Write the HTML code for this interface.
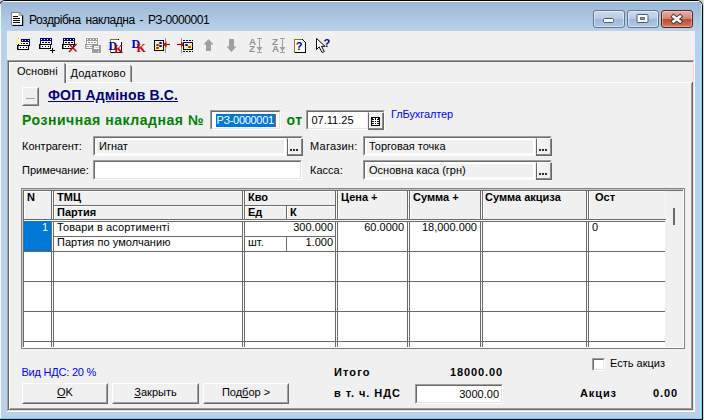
<!DOCTYPE html>
<html lang="uk">
<head>
<meta charset="utf-8">
<title>Роздрібна накладна - РЗ-0000001</title>
<style>
html,body{margin:0;padding:0;}
body{width:704px;height:420px;overflow:hidden;background:#d8d8d8;font-family:"Liberation Sans",sans-serif;font-size:11px;color:#000;position:relative;}
.a{position:absolute;white-space:nowrap;line-height:13px;}
.b{font-weight:bold;}
#win{left:-1px;top:0;width:704px;height:420px;background:#000;border-radius:6px 6px 0 0;}
#frame{left:1px;top:1px;width:702px;height:418px;background:#b9d1ea;border-radius:5px 5px 0 0;overflow:hidden;}
#titlegrad{left:0;top:0;width:702px;height:30px;background:linear-gradient(#9ab6d6 0,#a3bedc 8px,#afc8e3 19px,#b9d1ea 30px);}
#client{left:7px;top:31px;width:688px;height:381px;background:#f0f0f0;}
.fld{position:absolute;box-sizing:border-box;border:1px solid;border-color:#a0a0a0 #fff #fff #a0a0a0;background:#fff;height:20px;}
.fld i{position:absolute;left:0;top:0;right:0;bottom:0;border:1px solid;border-color:#696969 #fff #fff #696969;}
.fld.w{background:#fff;}
.fld.w i{border-color:#696969 #e3e3e3 #e3e3e3 #696969;}
.fld em{position:absolute;left:3px;top:3px;bottom:2px;background:#f0f0f0;}
.ib{position:absolute;box-sizing:border-box;background:#f0f0f0;border:1px solid;border-color:#fff #696969 #696969 #696969;box-shadow:inset -1px -1px 0 #888, inset 1px 0 0 #fff;}

.fld span{position:absolute;top:3px;line-height:13px;white-space:nowrap;font-style:normal;}
.btn{position:absolute;box-sizing:border-box;border:1px solid;border-color:#fff #696969 #696969 #fff;background:#f0f0f0;text-align:center;line-height:13px;}
.btn i{position:absolute;left:0;top:0;right:0;bottom:0;border:1px solid;border-color:#f0f0f0 #a0a0a0 #a0a0a0 #f0f0f0;}
.btn span{position:relative;font-style:normal;}
u{text-decoration:underline;}
</style>
</head>
<body>

<div id="win" class="a">
<div id="frame" class="a"><div id="titlegrad" class="a"></div>
<div class="a" style="left:0;top:0;width:702px;height:1px;background:rgba(255,255,255,.95)"></div>
<div class="a" style="left:0;top:0;width:1px;height:418px;background:rgba(255,255,255,.85)"></div>
<div class="a" style="left:701px;top:1px;width:1px;height:417px;background:linear-gradient(#d8fbff 0,#9aeeff 14px,#5fe0ff 60px)"></div>
<div class="a" style="left:0;top:417px;width:702px;height:1px;background:#4fd8ff"></div>
</div>
</div>
<div id="title" class="a" style="left:29px;top:13px;font-size:12px;line-height:14px;letter-spacing:-0.45px;word-spacing:2px;">Роздрібна накладна - РЗ-0000001</div>
<!-- caption buttons -->
<div class="a" style="left:593px;top:10px;width:32px;height:18px;border-radius:3px;box-sizing:border-box;border:1px solid #5f7593;background:linear-gradient(#c9daee 0,#b6cce6 47%,#9fbada 53%,#adc6e3 100%);box-shadow:inset 0 0 0 1px rgba(255,255,255,.5)"></div>
<div class="a" style="left:627px;top:10px;width:32px;height:18px;border-radius:3px;box-sizing:border-box;border:1px solid #5f7593;background:linear-gradient(#c9daee 0,#b6cce6 47%,#9fbada 53%,#adc6e3 100%);box-shadow:inset 0 0 0 1px rgba(255,255,255,.5)"></div>
<div class="a" style="left:661px;top:10px;width:32px;height:18px;border-radius:3px;box-sizing:border-box;border:1px solid #4f2326;background:linear-gradient(#e6b0a4 0,#d48573 47%,#bf4a30 53%,#d37a5e 100%);box-shadow:inset 0 0 0 1px rgba(255,255,255,.35)"></div>
<svg class="a" style="left:590px;top:8px" width="110" height="24" viewBox="590 8 110 24">
<rect x="603.5" y="18.500" width="10" height="4" rx="1" fill="#fff" stroke="#4a5a70" stroke-width="1"/>
<rect x="637" y="14.500" width="11" height="8" rx="1" fill="#fff" stroke="#4a5a70" stroke-width="1"/>
<rect x="640.500" y="17.500" width="4" height="2" fill="#7f9dc8" stroke="#4a5a70" stroke-width="0.800"/>
<path d="M673.500 16.500l6.500 5M680 16.500l-6.500 5" stroke="#4a3030" stroke-width="4.400" stroke-linecap="square" fill="none"/>
<path d="M673.500 16.500l6.500 5M680 16.500l-6.500 5" stroke="#fff" stroke-width="2.600" stroke-linecap="square" fill="none"/>
</svg>
<div id="client" class="a"></div>

<svg id="tb" class="a" style="left:0;top:0" width="704" height="70" viewBox="0 0 704 70" shape-rendering="crispEdges">
<!-- doc icon in title -->
<g shape-rendering="auto">
<path d="M11 12h8.500l3 3v10.300h-11.500z" fill="#808080"/>
<path d="M12.500 25.500h10.100v-10.300" stroke="#000" stroke-width="1.200" fill="none"/>
<path d="M12 13h7l3 3v8.800h-10z" fill="#fff"/>
<path d="M19 12.500v3h3z" fill="#d8d8d8" stroke="#808080" stroke-width="0.600"/>
<rect x="13" y="16" width="5" height="1" fill="#000"/><rect x="13" y="18" width="7" height="1" fill="#000"/><rect x="13" y="20" width="7" height="1" fill="#000"/><rect x="13" y="22" width="7" height="1" fill="#000"/>
</g>
<!-- icon1 new -->
<g><rect x="18" y="39" width="12" height="7" fill="#000080"/><rect x="22" y="40" width="1" height="1" fill="#fff"/><rect x="25" y="40" width="1" height="1" fill="#fff"/><rect x="28" y="40" width="1" height="1" fill="#fff"/><rect x="19" y="42" width="10" height="3" fill="#fff"/><rect x="20" y="43" width="2" height="1" fill="#000"/><rect x="23" y="43" width="2" height="1" fill="#000"/><rect x="26" y="43" width="2" height="1" fill="#000"/><rect x="17" y="45" width="12" height="5" fill="#000"/><rect x="18.5" y="46" width="9.5" height="3" fill="#fff" shape-rendering="auto"/><rect x="20" y="47" width="1" height="1" fill="#000"/><rect x="23" y="47" width="1" height="1" fill="#000"/><rect x="26" y="47" width="1" height="1" fill="#000"/><rect x="17" y="38" width="4" height="6" fill="#f4f4e0"/><path d="M16 38.500l5 5M21.500 38l-5 5" stroke="#ffff00" stroke-width="1" stroke-dasharray="1.400 1" fill="none" shape-rendering="auto"/><rect x="18" y="40" width="2" height="2" fill="#fff"/><rect x="16" y="40" width="1" height="1" fill="#ffff00"/><rect x="16" y="42" width="1" height="1" fill="#ffff00"/><rect x="19" y="43" width="1" height="1" fill="#ffff00"/><rect x="18" y="38" width="1" height="1" fill="#b0b0b0"/><rect x="16" y="44" width="1" height="1" fill="#d0d0d0"/></g>
<!-- icon2 add -->
<g><rect x="40" y="38" width="12" height="7" fill="#000080"/><rect x="41" y="39" width="1" height="1" fill="#fff"/><rect x="44" y="39" width="1" height="1" fill="#fff"/><rect x="47" y="39" width="1" height="1" fill="#fff"/><rect x="50" y="39" width="1" height="1" fill="#fff"/><rect x="41" y="41" width="10" height="3" fill="#fff"/><rect x="42" y="42" width="2" height="1" fill="#000"/><rect x="45" y="42" width="2" height="1" fill="#000"/><rect x="48" y="42" width="2" height="1" fill="#000"/><rect x="39" y="44" width="12" height="5" fill="#000"/><rect x="40.5" y="45" width="9.5" height="3" fill="#fff" shape-rendering="auto"/><rect x="42" y="46" width="1" height="1" fill="#000"/><rect x="45" y="46" width="1" height="1" fill="#000"/><rect x="48" y="46" width="1" height="1" fill="#000"/><rect x="52" y="48" width="1" height="5" fill="#000"/><rect x="50" y="50" width="5" height="1" fill="#000"/></g>
<!-- icon3 delete -->
<g><rect x="63" y="38" width="12" height="7" fill="#000080"/><rect x="64" y="39" width="1" height="1" fill="#fff"/><rect x="67" y="39" width="1" height="1" fill="#fff"/><rect x="70" y="39" width="1" height="1" fill="#fff"/><rect x="73" y="39" width="1" height="1" fill="#fff"/><rect x="64" y="41" width="10" height="3" fill="#fff"/><rect x="65" y="42" width="2" height="1" fill="#000"/><rect x="68" y="42" width="2" height="1" fill="#000"/><rect x="71" y="42" width="2" height="1" fill="#000"/><rect x="62" y="44" width="12" height="5" fill="#000"/><rect x="63.5" y="45" width="9.5" height="3" fill="#fff" shape-rendering="auto"/><rect x="65" y="46" width="1" height="1" fill="#000"/><rect x="68" y="46" width="1" height="1" fill="#000"/><rect x="71" y="46" width="1" height="1" fill="#000"/><path d="M68.500 43.500l8 8M76.500 44l-7.500 8" stroke="#c00000" stroke-width="1.400" fill="none" shape-rendering="auto"/></g>
<!-- icon4 disabled -->
<g><rect x="85" y="37" width="14" height="9" fill="#fafafa"/><rect x="84" y="43" width="14" height="7" fill="#fafafa"/><rect x="91" y="44" width="11" height="10" fill="#fafafa"/><rect x="86" y="38" width="12" height="7" fill="#9c9c9c"/><rect x="87" y="39" width="1" height="1" fill="#fff"/><rect x="90" y="39" width="1" height="1" fill="#fff"/><rect x="93" y="39" width="1" height="1" fill="#fff"/><rect x="96" y="39" width="1" height="1" fill="#fff"/><rect x="87" y="41" width="10" height="3" fill="#fff"/><rect x="88" y="42" width="2" height="1" fill="#9c9c9c"/><rect x="91" y="42" width="2" height="1" fill="#9c9c9c"/><rect x="94" y="42" width="2" height="1" fill="#9c9c9c"/><rect x="85" y="44" width="12" height="5" fill="#9c9c9c"/><rect x="86.5" y="45" width="9.5" height="3" fill="#fff" shape-rendering="auto"/><rect x="87" y="46" width="2" height="1" fill="#9c9c9c"/><rect x="90" y="46" width="2" height="1" fill="#9c9c9c"/><rect x="92" y="45" width="9" height="8" fill="#9c9c9c"/><rect x="94" y="46" width="5" height="3" fill="#fff"/><rect x="95" y="47" width="4" height="1" fill="#d0d0d0"/><rect x="98" y="51" width="1" height="1" fill="#fff"/></g>
<!-- icon5 DK doc -->
<g>
<path d="M110.500 52.500v-13h8" stroke="#808000" fill="none"/>
<path d="M118.500 39.500l3 3v10h-11" stroke="#000" fill="none"/>
<rect x="111" y="40" width="10" height="12" fill="#fff"/>
</g>
<!-- icon7 -->
<defs><pattern id="dth" x="0" y="0" width="2" height="2" patternUnits="userSpaceOnUse"><rect width="2" height="2" fill="#ffff00"/><rect x="0" y="0" width="1" height="1" fill="#fff"/><rect x="1" y="1" width="1" height="1" fill="#fff"/></pattern></defs>
<g>
<rect x="154" y="40" width="10" height="11" fill="#000"/>
<rect x="154" y="40" width="10" height="1" fill="#000080"/><rect x="154" y="40" width="1" height="10" fill="#000060"/>
<rect x="155" y="41" width="8" height="9" fill="url(#dth)"/>
<rect x="159" y="42" width="3" height="2" rx="1" fill="#0000ff" shape-rendering="auto"/><rect x="159" y="45" width="3" height="2" rx="1" fill="#0000ff" shape-rendering="auto"/>
<rect x="156" y="44" width="3" height="2" rx="1" fill="#ff0000" shape-rendering="auto"/><rect x="156" y="47" width="3" height="2" rx="1" fill="#ff0000" shape-rendering="auto"/>
<rect x="165" y="38" width="1" height="15" fill="#909090"/>
<rect x="164" y="44" width="6" height="1" fill="#800000"/>
<path d="M163 44.500l3.500 -3v6z" fill="#e00000" shape-rendering="auto"/>
</g>
<!-- icon8 -->
<g>
<rect x="181" y="38" width="1" height="15" fill="#909090"/>
<rect x="177" y="44" width="6" height="1" fill="#800000"/>
<path d="M184.500 44.500l-3.500 -3v6z" fill="#e00000" shape-rendering="auto"/>
<path d="M183 40.500h10M183 51.500h10" stroke="#000" stroke-dasharray="2 1" fill="none"/>
<rect x="183.500" y="42.500" width="9" height="7" fill="url(#dth)" stroke="#000"/>
<rect x="183" y="42" width="10" height="1" fill="#000080"/>
<rect x="185" y="44" width="3" height="2" rx="1" fill="#0000ff" shape-rendering="auto"/><rect x="188" y="46" width="3" height="2" rx="1" fill="#ff0000" shape-rendering="auto"/>
</g>
<!-- icon9 up -->
<path d="M208.500 39l5 5.500h-2.500v6.500h-5v-6.500h-2.500z" fill="#a0a0a0" shape-rendering="auto"/>
<!-- icon10 down -->
<path d="M231.500 52l5 -5.500h-2.500v-7.500h-5v7.500h-2.500z" fill="#a0a0a0" shape-rendering="auto"/>
<!-- icon11 AZ arrow -->
<g fill="#a0a0a0">
<rect x="257" y="38" width="5" height="1"/><rect x="257" y="52" width="5" height="1"/><rect x="259" y="38" width="1" height="14"/>
<path d="M256.500 47h6l-3 4z" shape-rendering="auto"/>
<rect x="280" y="38" width="5" height="1"/><rect x="280" y="52" width="5" height="1"/><rect x="282" y="38" width="1" height="14"/>
<path d="M279.500 47h6l-3 4z" shape-rendering="auto"/>
</g>
<!-- icon13 help doc -->
<g>
<rect x="295" y="40" width="10" height="12" fill="#fff"/>
<path d="M294.500 52.500v-13h8" stroke="#808000" fill="none"/>
<path d="M302.500 39.500l3 3v10h-11" stroke="#000" fill="none"/>
<path d="M302 40v3h3z" fill="#e0e0e0" shape-rendering="auto"/>
</g>
<!-- icon14 cursor -->
<path d="M316.500 38.500v11l2.600 -2.600l3 5.600l2.200 -1l-2.800 -5.200h3.600z" fill="#fff" stroke="#000" stroke-width="1" shape-rendering="auto"/>
</svg>

<div class="a b" style="left:108.5px;top:40px;font-family:'Liberation Serif',serif;font-size:12px;line-height:12px;color:#0000c8;">D</div>
<div class="a b" style="left:114px;top:43px;font-family:'Liberation Serif',serif;font-size:12px;line-height:12px;color:#c80000;">K</div>
<div class="a b" style="left:131.5px;top:38px;font-family:'Liberation Serif',serif;font-size:12px;line-height:12px;color:#0000c8;">D</div>
<div class="a b" style="left:136.5px;top:41.5px;font-family:'Liberation Serif',serif;font-size:12px;line-height:12px;color:#c80000;">K</div>
<div class="a b" style="left:249px;top:38.2px;font-size:8.5px;line-height:8px;color:#909090;transform:scaleX(1.15);transform-origin:0 0;">A</div>
<div class="a b" style="left:249px;top:45.2px;font-size:8.5px;line-height:8px;color:#909090;transform:scaleX(1.15);transform-origin:0 0;">Z</div>
<div class="a b" style="left:272px;top:38.2px;font-size:8.5px;line-height:8px;color:#909090;transform:scaleX(1.15);transform-origin:0 0;">Z</div>
<div class="a b" style="left:272px;top:45.2px;font-size:8.5px;line-height:8px;color:#909090;transform:scaleX(1.15);transform-origin:0 0;">A</div>
<div class="a b" style="left:295.7px;top:40.4px;font-size:11px;line-height:12px;color:#000080;">?</div>
<div class="a b" style="left:323.5px;top:37px;font-size:11px;line-height:12px;color:#000080;">?</div>

<div class="a" style="left:7px;top:60px;width:688px;height:1px;background:#a0a0a0"></div>
<div class="a" style="left:7px;top:60px;width:1px;height:352px;background:#a0a0a0"></div>
<div class="a" style="left:8px;top:61px;width:686px;height:1px;background:#696969"></div>
<div class="a" style="left:8px;top:61px;width:1px;height:350px;background:#696969"></div>
<div class="a" style="left:694px;top:60px;width:1px;height:352px;background:#fff"></div>
<div class="a" style="left:7px;top:411px;width:688px;height:1px;background:#fff"></div>
<div class="a" style="left:693px;top:61px;width:1px;height:350px;background:#e3e3e3"></div>
<div class="a" style="left:8px;top:410px;width:686px;height:1px;background:#e3e3e3"></div>
<div class="a" style="left:9px;top:82px;width:683px;height:1px;background:#fff"></div>
<div class="a" style="left:9px;top:62px;width:1px;height:347px;background:#fff"></div>
<div class="a" style="left:691px;top:83px;width:1px;height:326px;background:#a0a0a0"></div>
<div class="a" style="left:692px;top:82px;width:1px;height:328px;background:#696969"></div>
<div class="a" style="left:10px;top:408px;width:682px;height:1px;background:#a0a0a0"></div>
<div class="a" style="left:9px;top:409px;width:684px;height:1px;background:#696969"></div>
<div class="a" style="left:9px;top:62px;width:56px;height:21px;background:#f0f0f0"></div>
<div class="a" style="left:9px;top:63px;width:1px;height:20px;background:#fff"></div>
<div class="a" style="left:10px;top:62px;width:54px;height:1px;background:#fff"></div>
<div class="a" style="left:64px;top:63px;width:1px;height:20px;background:#a0a0a0"></div>
<div class="a" style="left:65px;top:64px;width:1px;height:19px;background:#696969"></div>
<div class="a" style="left:66px;top:65px;width:1px;height:17px;background:#fff"></div>
<div class="a" style="left:67px;top:64px;width:63px;height:1px;background:#fff"></div>
<div class="a" style="left:130px;top:65px;width:1px;height:17px;background:#a0a0a0"></div>
<div class="a" style="left:131px;top:66px;width:1px;height:16px;background:#696969"></div>
<div class="a" style="left:17px;top:65px;">Основні</div>
<div class="a" style="left:70.5px;top:67px;letter-spacing:0.18px">Додатково</div>
<div class="btn" style="left:22px;top:87px;width:17px;height:19px;"><i></i><span style="top:2px"></span></div>
<div class="a" style="left:26px;top:98px;width:9px;height:1px;background:#a0a0a0"></div>
<div class="a b" style="left:48px;top:87px;font-size:14px;line-height:16px;color:#000080;letter-spacing:0.16px;"><u>ФОП Адмінов В.С.</u></div>
<div class="a b" style="left:22px;top:112.4px;font-size:14px;line-height:16px;color:#008000;letter-spacing:0.54px;">Розничная накладная №</div>
<div class="fld w" style="left:210px;top:110px;width:71px;height:20px"><i></i><span style="left:5.6px;top:2.5px;letter-spacing:-0.3px;"><b style="font-weight:normal;background:#0078d7;color:#fff;display:inline-block;height:13px;line-height:13px;padding:0 1px;margin:0 -1px;border-right:1px solid #c06000">РЗ-0000001</b></span></div>
<div class="a b" style="left:286.5px;top:112.4px;font-size:14px;line-height:16px;color:#008000;letter-spacing:0.54px;">от</div>
<div class="fld w" style="left:306px;top:110px;width:79px;height:20px"><i></i><span style="left:4.5px;top:2.5px;">07.11.25</span></div>
<div class="a" style="left:367px;top:112px;width:1px;height:18px;background:#f0f0f0"></div><div class="ib" style="left:368px;top:112px;width:16px;height:18px"></div>
<svg class="a" style="left:371px;top:117px" width="9" height="9" viewBox="0 0 9 9" shape-rendering="crispEdges"><rect x="0" y="0" width="9" height="9" fill="#000"/><g fill="#fff"><rect x="2" y="1" width="2" height="1"/><rect x="5" y="1" width="2" height="1"/><rect x="1" y="3" width="7" height="1"/><rect x="1" y="5" width="7" height="1"/><rect x="1" y="7" width="7" height="1"/><rect x="3" y="2" width="1" height="6"/><rect x="5" y="2" width="1" height="6"/></g></svg>
<div class="a" style="left:391px;top:108px;color:#0000ff;letter-spacing:-0.1px;">ГлБухгалтер</div>
<div class="a" style="left:22px;top:140px;">Контрагент:</div>
<div class="fld" style="left:93px;top:136px;width:210px;height:20px"><i></i><em style="right:18px"></em><span style="left:5px;top:3px;">Игнат</span></div>
<div class="a" style="left:286px;top:138px;width:1px;height:18px;background:#f0f0f0"></div><div class="ib" style="left:287px;top:138px;width:16px;height:18px"><svg class="a" style="left:2px;top:10px" width="8" height="2" viewBox="0 0 8 2" shape-rendering="crispEdges"><rect x="0" y="0" width="2" height="2" fill="#303030"/><rect x="3" y="0" width="2" height="2" fill="#303030"/><rect x="6" y="0" width="2" height="2" fill="#303030"/></svg></div>
<div class="a" style="left:310px;top:140px;letter-spacing:0.25px">Магазин:</div>
<div class="fld" style="left:363px;top:136px;width:189px;height:20px"><i></i><em style="right:18px"></em><span style="left:5px;top:3px;">Торговая точка</span></div>
<div class="a" style="left:535px;top:138px;width:1px;height:18px;background:#f0f0f0"></div><div class="ib" style="left:536px;top:138px;width:16px;height:18px"><svg class="a" style="left:2px;top:10px" width="8" height="2" viewBox="0 0 8 2" shape-rendering="crispEdges"><rect x="0" y="0" width="2" height="2" fill="#303030"/><rect x="3" y="0" width="2" height="2" fill="#303030"/><rect x="6" y="0" width="2" height="2" fill="#303030"/></svg></div>
<div class="a" style="left:22px;top:164px;">Примечание:</div>
<div class="fld w" style="left:93px;top:160px;width:209px;height:20px"><i></i><span style="left:5px;top:2px;"></span></div>
<div class="a" style="left:310px;top:164px;">Касса:</div>
<div class="fld" style="left:363px;top:160px;width:189px;height:20px"><i></i><em style="right:18px"></em><span style="left:5px;top:3px;">Основна каса (грн)</span></div>
<div class="a" style="left:535px;top:162px;width:1px;height:18px;background:#f0f0f0"></div><div class="ib" style="left:536px;top:162px;width:16px;height:18px"><svg class="a" style="left:2px;top:10px" width="8" height="2" viewBox="0 0 8 2" shape-rendering="crispEdges"><rect x="0" y="0" width="2" height="2" fill="#303030"/><rect x="3" y="0" width="2" height="2" fill="#303030"/><rect x="6" y="0" width="2" height="2" fill="#303030"/></svg></div>
<div class="a" style="left:21.5px;top:366px;color:#0000ff;letter-spacing:-0.22px">Вид НДС: 20 %</div>
<div class="btn" style="left:22px;top:383px;width:86px;height:21px;"><i></i><span style="top:2px"><u>O</u>K</span></div>
<div class="btn" style="left:112px;top:383px;width:87px;height:21px;"><i></i><span style="top:2px"><u>З</u>акрыть</span></div>
<div class="btn" style="left:203px;top:383px;width:86px;height:21px;"><i></i><span style="top:2px">Под<u>б</u>ор &gt;</span></div>
<div class="a b" style="left:334px;top:366px;letter-spacing:1.1px;">Итого</div>
<div class="a b" style="left:450px;top:366px;letter-spacing:0.9px;">18000.00</div>
<div class="a b" style="left:334px;top:387px;letter-spacing:0.93px;">в т. ч. НДС</div>
<div class="fld w" style="left:415px;top:384px;width:88px;height:20px"><i></i><span style="right:3px">3000.00</span></div>
<div class="fld w" style="left:592px;top:358px;width:13px;height:13px"><i></i></div>
<div class="a" style="left:610px;top:357px;">Есть акциз</div>
<div class="a b" style="left:580px;top:387px;letter-spacing:0.9px;">Акциз</div>
<div class="a b" style="left:653px;top:387px;letter-spacing:0.9px;">0.00</div>

<div class="a" style="left:21px;top:188px;width:664px;height:1px;background:#808080"></div>
<div class="a" style="left:21px;top:188px;width:1px;height:161px;background:#808080"></div>
<div class="a" style="left:684px;top:188px;width:1px;height:161px;background:#808080"></div>
<div class="a" style="left:21px;top:348px;width:664px;height:1px;background:#808080"></div>
<div class="a" style="left:22px;top:189px;width:662px;height:1px;background:#c8c8c8"></div>
<div class="a" style="left:22px;top:189px;width:1px;height:159px;background:#c8c8c8"></div>
<div class="a" style="left:23px;top:190px;width:660px;height:1px;background:#696969"></div>
<div class="a" style="left:23px;top:190px;width:1px;height:157px;background:#696969"></div>
<div class="a" style="left:683px;top:189px;width:1px;height:159px;background:#fff"></div>
<div class="a" style="left:22px;top:347px;width:662px;height:1px;background:#fff"></div>
<div class="a" style="left:24px;top:221px;width:641px;height:126px;background:#fff"></div>
<div class="a" style="left:24px;top:191px;width:27px;height:1px;background:#fff"></div>
<div class="a" style="left:24px;top:191px;width:1px;height:28px;background:#fff"></div>
<div class="a" style="left:54px;top:191px;width:188px;height:1px;background:#fff"></div>
<div class="a" style="left:54px;top:191px;width:1px;height:28px;background:#fff"></div>
<div class="a" style="left:245px;top:191px;width:90px;height:1px;background:#fff"></div>
<div class="a" style="left:245px;top:191px;width:1px;height:28px;background:#fff"></div>
<div class="a" style="left:338px;top:191px;width:69px;height:1px;background:#fff"></div>
<div class="a" style="left:338px;top:191px;width:1px;height:28px;background:#fff"></div>
<div class="a" style="left:410px;top:191px;width:70px;height:1px;background:#fff"></div>
<div class="a" style="left:410px;top:191px;width:1px;height:28px;background:#fff"></div>
<div class="a" style="left:483px;top:191px;width:103px;height:1px;background:#fff"></div>
<div class="a" style="left:483px;top:191px;width:1px;height:28px;background:#fff"></div>
<div class="a" style="left:589px;top:191px;width:76px;height:1px;background:#fff"></div>
<div class="a" style="left:589px;top:191px;width:1px;height:28px;background:#fff"></div>
<div class="a" style="left:54px;top:205px;width:188px;height:1px;background:#696969"></div>
<div class="a" style="left:54px;top:206px;width:188px;height:1px;background:#fff"></div>
<div class="a" style="left:245px;top:205px;width:90px;height:1px;background:#696969"></div>
<div class="a" style="left:245px;top:206px;width:90px;height:1px;background:#fff"></div>
<div class="a" style="left:286px;top:206px;width:1px;height:13px;background:#696969"></div>
<div class="a" style="left:287px;top:206px;width:1px;height:13px;background:#fff"></div>
<div class="a" style="left:665px;top:191px;width:1px;height:30px;background:#f8f8f8"></div>
<div class="a" style="left:51px;top:191px;width:1px;height:156px;background:#696969"></div>
<div class="a" style="left:52px;top:191px;width:1px;height:156px;background:#fff"></div>
<div class="a" style="left:53px;top:191px;width:1px;height:156px;background:#696969"></div>
<div class="a" style="left:242px;top:191px;width:1px;height:156px;background:#696969"></div>
<div class="a" style="left:243px;top:191px;width:1px;height:156px;background:#fff"></div>
<div class="a" style="left:244px;top:191px;width:1px;height:156px;background:#696969"></div>
<div class="a" style="left:335px;top:191px;width:1px;height:156px;background:#696969"></div>
<div class="a" style="left:336px;top:191px;width:1px;height:156px;background:#fff"></div>
<div class="a" style="left:337px;top:191px;width:1px;height:156px;background:#696969"></div>
<div class="a" style="left:407px;top:191px;width:1px;height:156px;background:#696969"></div>
<div class="a" style="left:408px;top:191px;width:1px;height:156px;background:#fff"></div>
<div class="a" style="left:409px;top:191px;width:1px;height:156px;background:#696969"></div>
<div class="a" style="left:480px;top:191px;width:1px;height:156px;background:#696969"></div>
<div class="a" style="left:481px;top:191px;width:1px;height:156px;background:#fff"></div>
<div class="a" style="left:482px;top:191px;width:1px;height:156px;background:#696969"></div>
<div class="a" style="left:586px;top:191px;width:1px;height:156px;background:#696969"></div>
<div class="a" style="left:587px;top:191px;width:1px;height:156px;background:#fff"></div>
<div class="a" style="left:588px;top:191px;width:1px;height:156px;background:#696969"></div>
<div class="a" style="left:24px;top:219px;width:642px;height:1px;background:#696969"></div>
<div class="a" style="left:24px;top:220px;width:642px;height:1px;background:#fff"></div>
<div class="a" style="left:24px;top:221px;width:641px;height:1px;background:#696969"></div>
<div class="a" style="left:24px;top:221px;width:27px;height:30px;background:#0078d7"></div>
<div class="a" style="left:54px;top:236px;width:188px;height:1px;background:#696969"></div>
<div class="a" style="left:245px;top:236px;width:90px;height:1px;background:#696969"></div>
<div class="a" style="left:286px;top:236px;width:1px;height:15px;background:#696969"></div>
<div class="a" style="left:24px;top:251px;width:641px;height:1px;background:#696969"></div>
<div class="a" style="left:24px;top:281px;width:641px;height:1px;background:#696969"></div>
<div class="a" style="left:24px;top:311px;width:641px;height:1px;background:#696969"></div>
<div class="a" style="left:24px;top:341px;width:641px;height:1px;background:#696969"></div>
<div class="a" style="left:673px;top:208px;width:2px;height:17px;background:#696969"></div>
<div class="a b" style="left:27px;top:191px;">N</div>
<div class="a b" style="left:57px;top:191px;">ТМЦ</div>
<div class="a b" style="left:57px;top:206px;">Партия</div>
<div class="a b" style="left:248px;top:191px;">Кво</div>
<div class="a b" style="left:248px;top:206px;">Ед</div>
<div class="a b" style="left:290px;top:206px;">К</div>
<div class="a b" style="left:341px;top:191px;">Цена +</div>
<div class="a b" style="left:413px;top:191px;">Сумма +</div>
<div class="a b" style="left:485px;top:191px;">Сумма акциза</div>
<div class="a b" style="left:595px;top:191px;">Ост</div>
<div class="a" style="right:656px;top:221px;color:#fff">1</div>
<div class="a" style="left:57px;top:221px;letter-spacing:0.12px">Товари в асортименті</div>
<div class="a" style="left:57px;top:236px;letter-spacing:0.05px">Партия по умолчанию</div>
<div class="a" style="right:371px;top:221px;">300.000</div>
<div class="a" style="left:248px;top:236px;">шт.</div>
<div class="a" style="right:371px;top:236px;">1.000</div>
<div class="a" style="right:300px;top:221px;">60.0000</div>
<div class="a" style="right:227px;top:221px;">18,000.000</div>
<div class="a" style="left:592px;top:221px;">0</div>

</body>
</html>
